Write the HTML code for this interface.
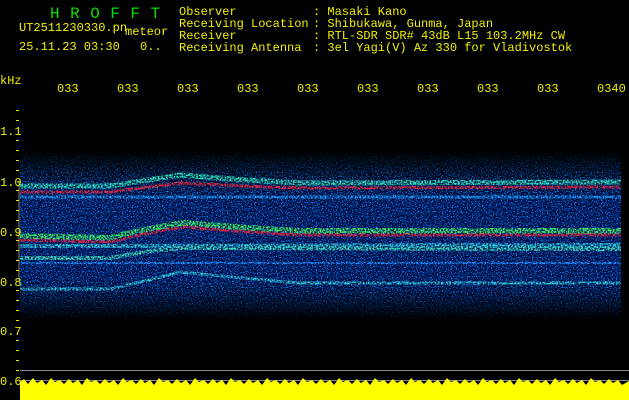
<!DOCTYPE html>
<html><head><meta charset="utf-8"><style>
html,body{margin:0;padding:0;background:#000;width:629px;height:400px;overflow:hidden}
svg{display:block}
text{font-family:"Liberation Mono","DejaVu Sans Mono",monospace;fill:#f0f000;font-size:12px}
</style></head><body>
<svg width="629" height="400" viewBox="0 0 629 400">
<defs>
<filter id="n" x="0" y="0" width="100%" height="100%">
<feTurbulence type="fractalNoise" baseFrequency="0.8" numOctaves="2" seed="3"/>
<feColorMatrix type="matrix" values="0 0 0 0 0  0 0 0 0 0.25  0 0 0 0 1  0 0 0 6 -3.1"/>
</filter>
<filter id="r" x="0" y="-50%" width="100%" height="200%">
<feTurbulence type="fractalNoise" baseFrequency="0.6" numOctaves="1" seed="7" result="t"/>
<feColorMatrix in="t" type="matrix" values="0 0 0 0 0 0 0 0 0 0 0 0 0 0 0 0 0 0 4 -1.5" result="m"/>
<feComposite in="SourceGraphic" in2="m" operator="in"/>
</filter>
<linearGradient id="bg" x1="0" y1="0" x2="0" y2="1">
<stop offset="0" stop-color="#000"/><stop offset="0.15" stop-color="#000518"/><stop offset="0.3" stop-color="#000a40"/><stop offset="0.75" stop-color="#000a40"/><stop offset="0.9" stop-color="#00051a"/><stop offset="1" stop-color="#000"/>
</linearGradient>
<linearGradient id="fade" x1="0" y1="0" x2="0" y2="1">
<stop offset="0" stop-color="#fff" stop-opacity="0"/><stop offset="0.2" stop-color="#fff" stop-opacity="1"/><stop offset="0.8" stop-color="#fff" stop-opacity="1"/><stop offset="1" stop-color="#fff" stop-opacity="0"/>
</linearGradient>
<mask id="mk"><rect x="20" y="150" width="601" height="170" fill="url(#fade)"/></mask>
</defs>
<rect x="20" y="150" width="601" height="170" fill="url(#bg)"/>
<g mask="url(#mk)"><rect x="20" y="150" width="601" height="170" filter="url(#n)"/></g>
<g fill="none" filter="url(#r)">
<path d="M20 186 L110 186 Q150 180 180 175 Q240 180 300 183 L621 182" stroke="#30e0c0" stroke-width="5"/>
<path d="M20 192 L110 192 Q150 187 180 183 Q240 186 300 188 L621 187" stroke="#ff2040" stroke-width="3"/>
<path d="M20 197 L621 197" stroke="#20a0ff" stroke-width="3"/>
<path d="M20 236 L110 238 Q150 228 185 223 Q240 228 300 231 L621 231" stroke="#40f060" stroke-width="6"/>
<path d="M20 240 L110 242 Q150 232 185 227 Q240 232 300 235 L621 235" stroke="#ff2040" stroke-width="3"/>
<path d="M20 246 L621 245" stroke="#30d0e0" stroke-width="4"/>
<path d="M20 258 L110 258 Q150 250 185 248 L621 249" stroke="#40e0c0" stroke-width="4"/>
<path d="M20 263 L621 263" stroke="#2090ff" stroke-width="2"/>
<path d="M20 289 L110 289 Q150 280 180 272 Q240 278 300 283 L621 283" stroke="#30d0e0" stroke-width="3"/>
</g>
<line x1="19" y1="181" x2="19" y2="281" stroke="#888" stroke-width="1"/>
<line x1="20" y1="370.5" x2="629" y2="370.5" stroke="#888" stroke-width="1"/>
<line x1="20" y1="380.5" x2="629" y2="380.5" stroke="#888" stroke-width="1"/>
<path d="M20 400 L20 382 L24 379 L28 384 L33 378 L37 383 L42 380 L46 385 L51 378 L55 382 L60 380 L64 384 L69 379 L73 383 L78 380 L82 385 L87 378 L91 382 L96 380 L100 384 L105 379 L109 383 L114 380 L118 385 L123 378 L127 382 L132 380 L136 384 L141 379 L145 383 L150 380 L154 385 L159 378 L163 382 L168 380 L172 384 L177 379 L181 383 L186 380 L190 385 L195 378 L199 382 L204 380 L208 384 L213 379 L217 383 L222 380 L226 385 L231 378 L235 382 L240 380 L244 384 L249 379 L253 383 L258 380 L262 385 L267 378 L271 382 L276 380 L280 384 L285 379 L289 383 L294 380 L298 385 L303 378 L307 382 L312 380 L316 384 L321 379 L325 383 L330 380 L334 385 L339 378 L343 382 L348 380 L352 384 L357 379 L361 383 L366 380 L370 385 L375 378 L379 382 L384 380 L388 384 L393 379 L397 383 L402 380 L406 385 L411 378 L415 382 L420 380 L424 384 L429 379 L433 383 L438 380 L442 385 L447 378 L451 382 L456 380 L460 384 L465 379 L469 383 L474 380 L478 385 L483 378 L487 382 L492 380 L496 384 L501 379 L505 383 L510 380 L514 385 L519 378 L523 382 L528 380 L532 384 L537 379 L541 383 L546 380 L550 385 L555 378 L559 382 L564 380 L568 384 L573 379 L577 383 L582 380 L586 385 L591 378 L595 382 L600 380 L604 384 L609 379 L613 383 L618 380 L622 385 L629 381 L629 400Z" fill="#ffff00"/>
<g fill="#f0f000">
<rect x="16" y="110" width="3" height="1"/><rect x="16" y="120" width="3" height="1"/><rect x="16" y="140" width="3" height="1"/><rect x="16" y="150" width="3" height="1"/><rect x="16" y="160" width="3" height="1"/><rect x="16" y="170" width="3" height="1"/><rect x="16" y="190" width="3" height="1"/><rect x="16" y="200" width="3" height="1"/><rect x="16" y="210" width="3" height="1"/><rect x="16" y="220" width="3" height="1"/><rect x="16" y="240" width="3" height="1"/><rect x="16" y="250" width="3" height="1"/><rect x="16" y="260" width="3" height="1"/><rect x="16" y="270" width="3" height="1"/><rect x="16" y="290" width="3" height="1"/><rect x="16" y="300" width="3" height="1"/><rect x="16" y="310" width="3" height="1"/><rect x="16" y="320" width="3" height="1"/><rect x="16" y="340" width="3" height="1"/><rect x="16" y="350" width="3" height="1"/><rect x="16" y="360" width="3" height="1"/><rect x="16" y="370" width="3" height="1"/>
</g>
<text x="0" y="135">1.1</text><text x="0" y="186">1.0</text><text x="0" y="236">0.9</text><text x="0" y="286">0.8</text><text x="0" y="335">0.7</text><text x="0" y="385">0.6</text>
<text x="0" y="84">kHz</text>
<g><text x="57" y="92">033</text><text x="117" y="92">033</text><text x="177" y="92">033</text><text x="237" y="92">033</text><text x="297" y="92">033</text><text x="357" y="92">033</text><text x="417" y="92">033</text><text x="477" y="92">033</text><text x="537" y="92">033</text><text x="597" y="92">0340</text></g>
<text x="50" y="18" style="fill:#00e000;font-size:16px;letter-spacing:10.5px">HROFFT</text>
<text x="19" y="31">UT2511230330.pn</text><text x="125" y="35">meteor</text>
<text x="19" y="50">25.11.23 03:30</text><text x="140" y="50">0..</text>
<text x="179" y="15">Observer</text><text x="179" y="27">Receiving Location</text><text x="179" y="39">Receiver</text><text x="179" y="51">Receiving Antenna</text>
<text x="313" y="15">: Masaki Kano</text><text x="313" y="27">: Shibukawa, Gunma, Japan</text><text x="313" y="39">: RTL-SDR SDR# 43dB L15 103.2MHz CW</text><text x="313" y="51">: 3el Yagi(V) Az 330 for Vladivostok</text>
</svg>
</body></html>
